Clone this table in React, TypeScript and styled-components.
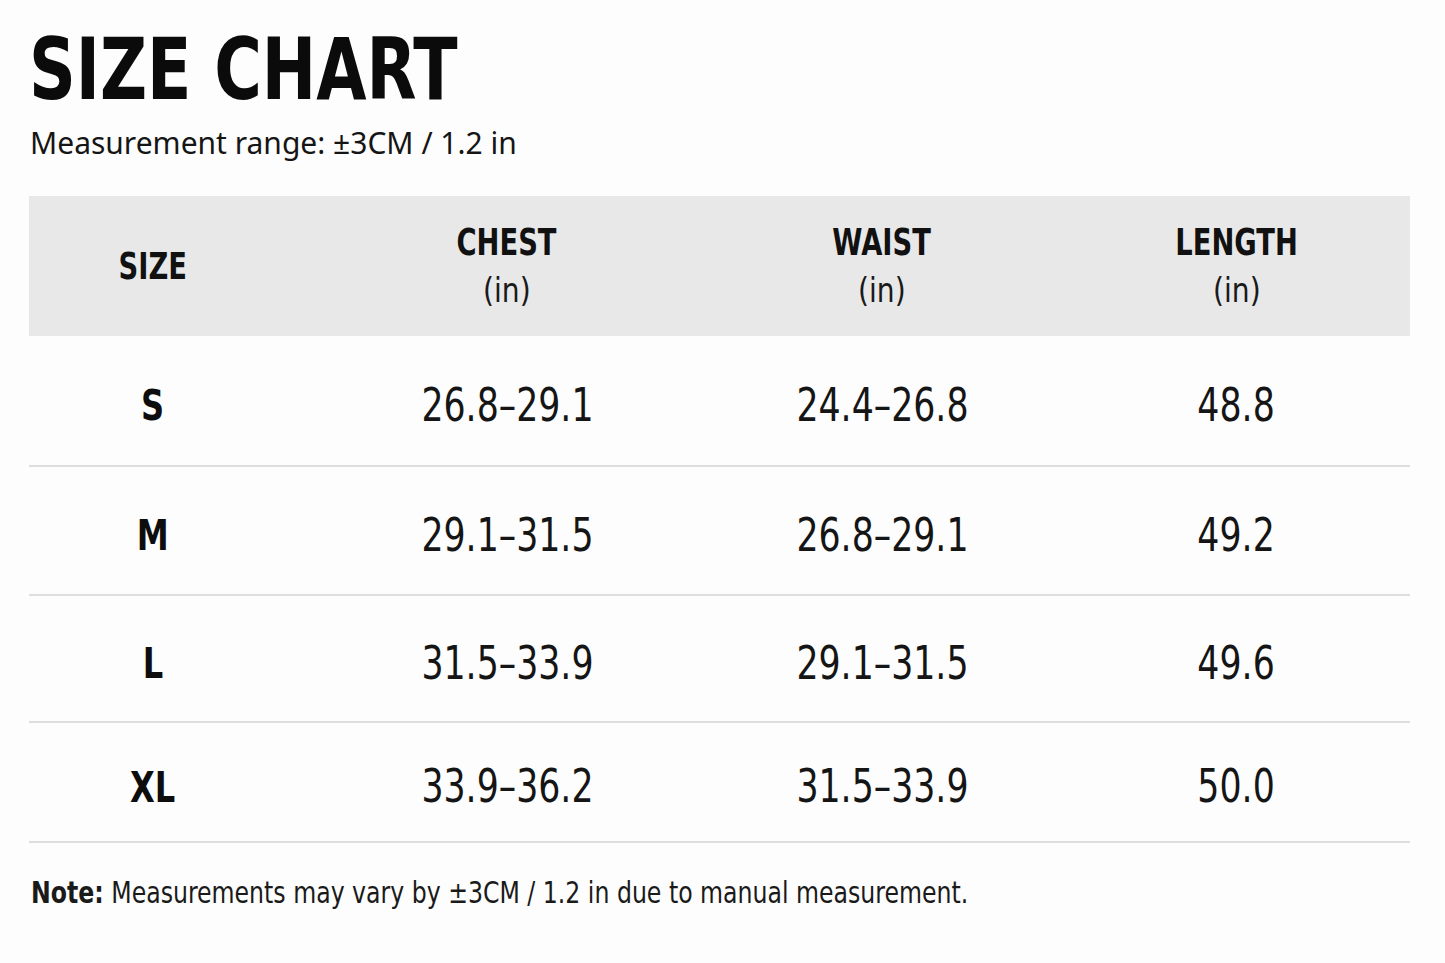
import React from "react";
import styled, { createGlobalStyle } from "styled-components";

const Global = createGlobalStyle`
  html, body { margin: 0; padding: 0; background: #fdfdfd; }
  body { font-family: "Noto Sans", "DejaVu Sans", sans-serif; color: #111; }
`;

const Page = styled.div`
  width: 1445px;
  height: 963px;
  box-sizing: border-box;
  padding: 24px 35px 0 29px;
  background: #fdfdfd;
`;

const Title = styled.h1`
  margin: 0;
  font-family: "DejaVu Sans Condensed", "DejaVu Sans", sans-serif;
  font-weight: 700;
  font-size: 85px;
  line-height: 92px;
  color: #0b0b0b;
  transform: scaleX(0.85);
  transform-origin: left center;
`;

const Subtitle = styled.p`
  margin: 8px 0 0 1px;
  font-family: "Noto Sans", sans-serif;
  font-size: 30px;
  line-height: 38px;
  color: #151515;
`;

const Table = styled.div`
  margin-top: 34px;
  width: 1381px;
`;

const Grid = styled.div<{ $height: number; $shade?: boolean; $rule?: boolean }>`
  display: grid;
  grid-template-columns: 248px 460px 290px 383px;
  align-items: center;
  height: ${(p) => p.$height}px;
  background: ${(p) => (p.$shade ? "#e8e8e8" : "transparent")};
  border-bottom: ${(p) => (p.$rule ? "2px solid #dedede" : "none")};
  box-sizing: border-box;
`;

const Cell = styled.div<{ $shift?: number }>`
  display: flex;
  flex-direction: column;
  align-items: center;
  padding-left: ${(p) => (p.$shift ?? 0) * 2}px;
`;

const HeadLabel = styled.span`
  display: inline-block;
  font-family: "DejaVu Sans Condensed", "DejaVu Sans", sans-serif;
  font-weight: 700;
  font-size: 38px;
  line-height: 44px;
  color: #111;
  transform: scaleX(0.8);
`;

const Unit = styled.span`
  display: inline-block;
  margin-top: 4px;
  font-family: "DejaVu Sans Condensed", "DejaVu Sans", sans-serif;
  font-size: 34px;
  line-height: 44px;
  color: #1a1a1a;
  transform: scaleX(0.92);
`;

const SizeLabel = styled.span`
  display: inline-block;
  margin-top: 10px;
  font-family: "DejaVu Sans Condensed", "DejaVu Sans", sans-serif;
  font-weight: 700;
  font-size: 42px;
  color: #0d0d0d;
  transform: scaleX(0.85);
`;

const Value = styled.span`
  display: inline-block;
  margin-top: 8px;
  font-family: "DejaVu Sans Condensed", "DejaVu Sans", sans-serif;
  font-size: 46px;
  color: #151515;
  transform: scaleX(0.84);
`;

const Note = styled.p`
  margin: 32px 0 0 2px;
  font-family: "DejaVu Sans Condensed", "DejaVu Sans", sans-serif;
  font-size: 30px;
  color: #1a1a1a;
  white-space: nowrap;
  transform: scaleX(0.875);
  transform-origin: left center;
  b { font-weight: 700; }
`;

const rows = [
  { size: "S", chest: "26.8–29.1", waist: "24.4–26.8", length: "48.8", h: 131 },
  { size: "M", chest: "29.1–31.5", waist: "26.8–29.1", length: "49.2", h: 129 },
  { size: "L", chest: "31.5–33.9", waist: "29.1–31.5", length: "49.6", h: 127 },
  { size: "XL", chest: "33.9–36.2", waist: "31.5–33.9", length: "50.0", h: 120 },
];

export default function App() {
  return (
    <>
      <Global />
      <Page>
        <Title>SIZE CHART</Title>
        <Subtitle>Measurement range: ±3CM / 1.2 in</Subtitle>
        <Table>
          <Grid $height={140} $shade>
            <Cell><HeadLabel>SIZE</HeadLabel></Cell>
            <Cell><HeadLabel>CHEST</HeadLabel><Unit>(in)</Unit></Cell>
            <Cell><HeadLabel>WAIST</HeadLabel><Unit>(in)</Unit></Cell>
            <Cell $shift={18}><HeadLabel>LENGTH</HeadLabel><Unit>(in)</Unit></Cell>
          </Grid>
          {rows.map((r) => (
            <Grid key={r.size} $height={r.h} $rule>
              <Cell><SizeLabel>{r.size}</SizeLabel></Cell>
              <Cell><Value>{r.chest}</Value></Cell>
              <Cell><Value>{r.waist}</Value></Cell>
              <Cell $shift={18}><Value>{r.length}</Value></Cell>
            </Grid>
          ))}
        </Table>
        <Note><b>Note:</b> Measurements may vary by ±3CM / 1.2 in due to manual measurement.</Note>
      </Page>
    </>
  );
}
